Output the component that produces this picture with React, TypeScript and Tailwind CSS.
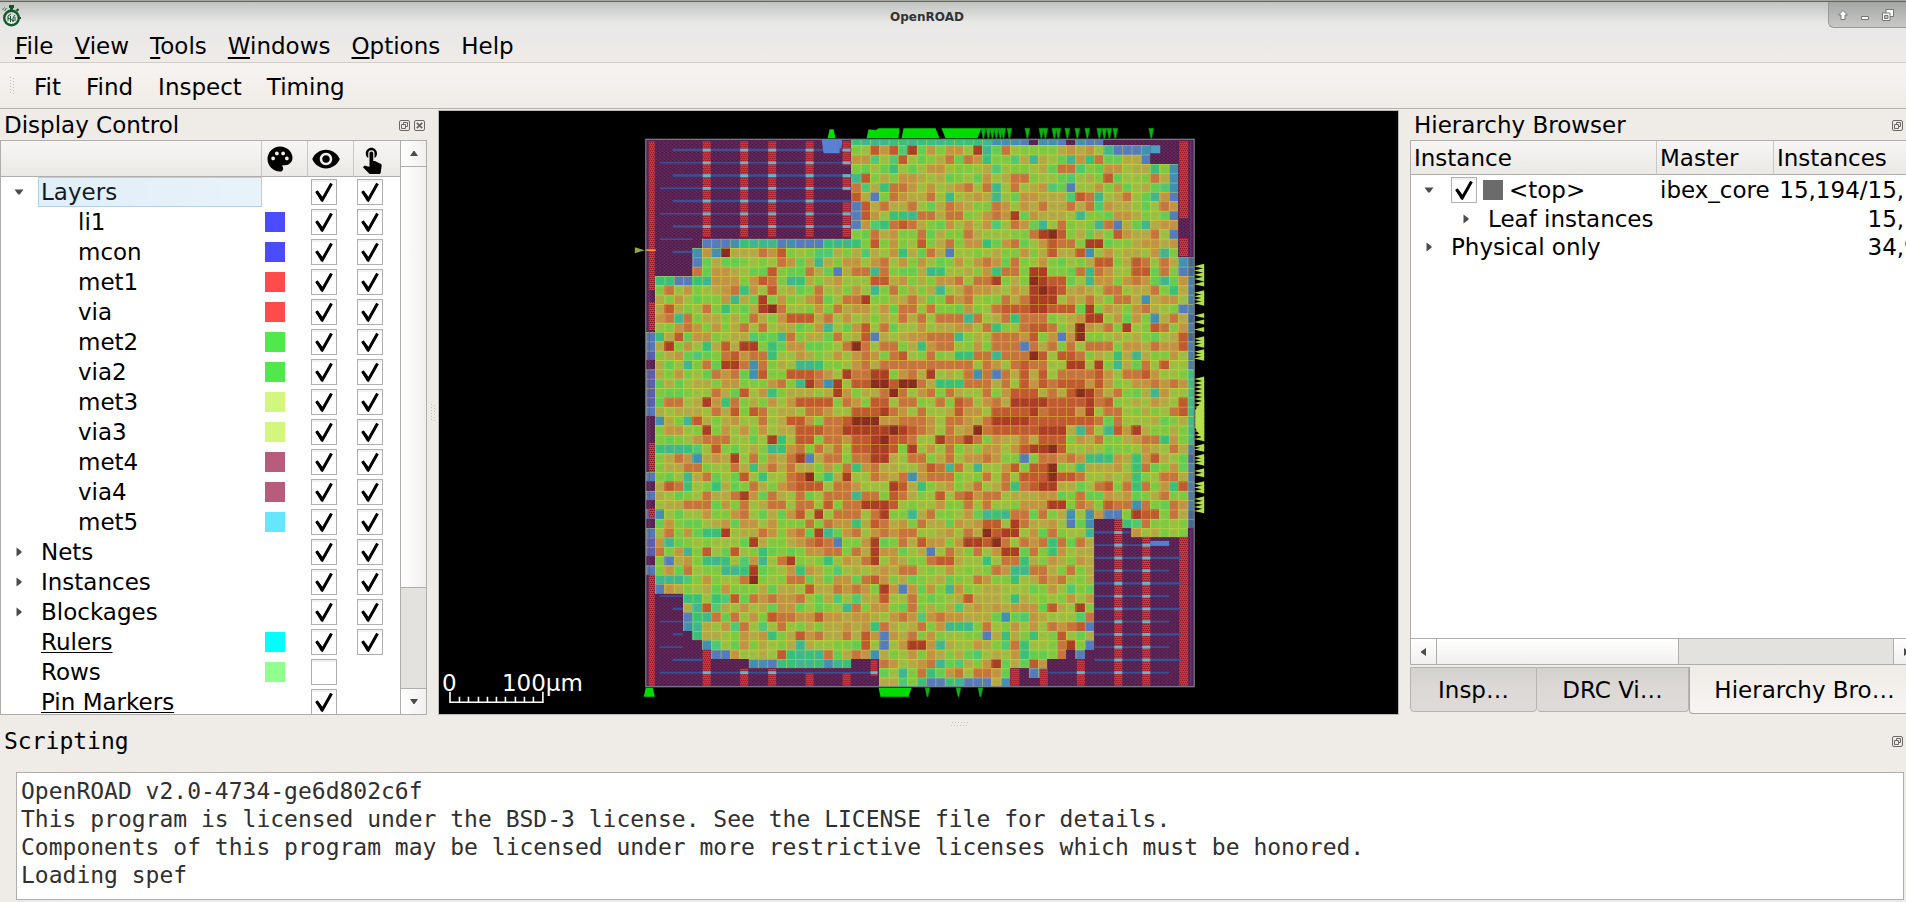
import React from "react";
import { MdPalette, MdTouchApp, MdVisibility } from "react-icons/md";

/* ---------- placement density map ---------- */

const CELL = 9.35;
const COLS = 59;
const ROWS = 59;
const DIE = { x: 645, y: 139, w: 549, h: 548 };

const cellX = (c: number) => DIE.x + c * CELL;
const cellY = (r: number) => (r === 0 ? DIE.y : 144.9 + (r - 1) * CELL);

type Spans = Record<number, string>;

// Row -> columns, ranges written as "a-b"
const WARM: Spans = {
  1: "24 26", 2: "27", 4: "23 49", 6: "22 46", 7: "23", 8: "23", 9: "27", 10: "50 42-44", 11: "24 29 43", 12: "14 43 46",
  13: "48-49 52", 14: "13 52-53", 15: "12 24-25 43-44", 16: "13 44", 18: "2 38-45", 19: "15-17", 20: "23 41-42 54",
  21: "3 23 57 41", 22: "8 57", 23: "9 27 42 44-45", 24: "40 55", 25: "12 15-17 40 42 48 53", 26: "22-23 26 40 42 44-46 48",
  27: "10 45 39-41", 28: "16-19 24-25 33 39-47 49 57", 29: "9 11 22-24 33 37-40 43-45 57", 30: "5 15-16 39-47 21",
  31: "16-18 28 37-41 50", 32: "22-27 42-44 16-17", 33: "7 22-23 26 40 44", 34: "54", 35: "30 39 41-42", 36: "10 16 40-45",
  37: "2 16-18 27 49 57 41", 38: "26 31 34", 39: "19 26 49", 40: "16 53-54", 41: "24 36-37", 42: "36-39", 43: "18 29 36",
  44: "6 9", 45: "31-32", 47: "24", 48: "17", 49: "9 25 34", 50: "6 43", 51: "13 18", 52: "46", 53: "16 23 44", 54: "23",
  55: "14", 56: "41",
};

const HOT: Spans = {
  1: "28 35", 8: "39", 10: "42", 11: "47-48", 14: "41-42", 15: "42 37", 16: "41 43", 17: "12 23 41-43", 18: "12 41-42 47",
  19: "47-48", 20: "51", 22: "2 10-11", 24: "8-9 45-46 48", 25: "21 24-25 30", 26: "17 20", 27: "20 47", 28: "6 39-42 47",
  29: "25 41 47", 30: "37-40", 31: "6 21-25 27 42-44 52", 32: "13 31 34 24", 33: "24-25 28 41-42", 34: "9 16 24-25",
  36: "21", 37: "26 42-43", 38: "10", 39: "23-25 43-44", 40: "18 25 52", 41: "39", 42: "8 18 38-39", 43: "11 24 34-35",
  44: "24 38-39", 45: "15 24", 46: "11", 48: "25", 50: "46", 54: "28-29 45", 56: "37",
};

const DENSE: Spans = {
  10: "43", 12: "8", 15: "41", 16: "42", 18: "13", 20: "46", 21: "46", 22: "22", 23: "41", 26: "24-25 27-28", 27: "26 46",
  30: "22-24", 31: "26 35", 32: "25", 33: "43", 35: "43", 36: "17 43", 42: "36", 43: "37", 47: "11",
};

const COOL: Spans = {
  0: "22-36", 1: "36 49", 2: "36 41 45 47", 3: "26 54", 4: "22", 5: "25 37", 6: "32 37 48 54", 8: "26-28 46", 9: "25 42 48 53",
  11: "10-13 19-22 36", 12: "27 55", 13: "18", 14: "24 30-31 37 47", 15: "1-2 5-6 15-16 47 55", 16: "10 24 31 56", 17: "9",
  18: "8", 19: "3 34 39", 20: "19 37", 21: "1 14 33", 22: "6 13 29", 23: "13 33-34 37 50 52", 24: "4 16-18 50", 26: "16 31-33",
  27: "13 40 54", 28: "8", 30: "4", 31: "41 46 49", 32: "14 55", 33: "1-4 13-14", 34: "47-49 52", 35: "11 22 32 35 46 52",
  36: "4 12 19 52", 37: "4 7 29 39 52 56", 38: "22", 40: "28 36-38", 41: "22 51", 42: "6-7 19 47", 43: "2 43", 44: "4 12 43",
  45: "6-8 12 19 36 40", 46: "8-10 16 40 39", 47: "1-3 39", 48: "32", 49: "4-5 7 39", 50: "5 21", 51: "5-6", 52: "5 24 32-34",
  53: "5 13 38 41", 54: "16 31 40", 55: "15-18 40", 56: "14-18 20-21 31", 57: "27 30", 58: "29 32-33",
};

const COLD: Spans = {
  0: "19-20 37-40 42-44 46-48", 1: "19 50-53", 2: "53", 3: "56", 4: "56", 5: "45 56", 6: "24 56", 7: "22", 8: "22 56", 9: "22 50",
  10: "56", 11: "6-9 14-18", 12: "5 7 32 47", 13: "5 57", 14: "20 57", 15: "3-4", 17: "53", 18: "57", 19: "54", 21: "24 44",
  22: "40", 24: "11", 25: "11 35 37", 26: "19", 30: "1", 34: "5 17 40", 36: "28", 39: "52", 40: "1 45 47 49-50", 41: "45 47",
  43: "20", 44: "30", 45: "2", 47: "48", 48: "1 27", 51: "4 38", 52: "4 47", 53: "25 36", 54: "6 25 47", 55: "7-8 24 46",
  56: "11-13 19", 57: "41-42", 58: "30-31 34-36 38",
};

// Unplaced area of the die
const EMPTY: Spans = {
  0: "0-18 21 41 45 49-58", 1: "0-21 54-58", 2: "0-21 54-58", 3: "0-21 57-58", 4: "0-21 57-58", 5: "0-21 57-58",
  6: "0-21 57-58", 7: "0-21 57-58", 8: "0-21 57-58", 9: "0-21 57-58", 10: "0-21 57-58", 11: "0-5 57-58", 12: "0-4 57-58",
  13: "0-4", 14: "0-4", 15: "0", 16: "0", 17: "0", 18: "0", 19: "0", 20: "0", 24: "0", 30: "0", 31: "0", 32: "0", 33: "0",
  34: "0", 35: "0", 37: "0", 39: "0", 41: "0", 45: "0", 47: "0", 48: "0", 42: "48-51 58", 49: "0-3", 50: "0-3", 51: "0-3",
  52: "0-3", 53: "0-4", 54: "0-5", 55: "0-6 45 47", 56: "0-10 22-24 43-47", 57: "0-24 39-40 43-47", 58: "0-24 39-47",
};

const inSpan = (spans: Spans, r: number, c: number) =>
  (spans[r] ?? "").split(" ").some((part) => {
    if (!part) return false;
    const [a, b] = part.split("-").map(Number);
    return c >= a && c <= (b ?? a);
  });

const noise = (r: number, c: number) => {
  let n = Math.imul(r + 11, 374761393) + Math.imul(c + 7, 668265263);
  n = Math.imul(n ^ (n >>> 13), 1274126177);
  return ((n ^ (n >>> 16)) >>> 0) / 4294967296;
};

const isEmpty = (r: number, c: number) =>
  inSpan(EMPTY, r, c) || (r >= 41 && c >= 48 && c <= 50) || (r >= 43 && c >= 48);

const colourOf = (r: number, c: number) => {
  const n = noise(r, c);
  if (isEmpty(r, c)) return "#5c2356";
  if (inSpan(DENSE, r, c)) return "#8a2420";
  if (inSpan(HOT, r, c)) return "#ac3626";
  if (inSpan(WARM, r, c)) return "#c25431";
  if (inSpan(COLD, r, c)) return n > 0.5 ? "#3f8cb8" : "#5278c4";
  if (inSpan(COOL, r, c)) return n > 0.5 ? "#36bf7e" : "#3cb594";
  if (c === 0) return n > 0.4 ? "#5a5ab4" : "#5373be";
  if (c === 58) return r > 24 && r < 33 ? "#3fb68c" : n > 0.4 ? "#4c78a8" : "#45609c";
  const heat = Math.exp(-((c - 24) ** 2 + (r - 31) ** 2) / 170) + Math.exp(-((c - 43) ** 2 + (r - 25) ** 2) / 160);
  const v = n + heat * 0.24;
  if (v < 0.06) return "#4cc878";
  if (v < 0.18) return "#64cc54";
  if (v < 0.36) return "#80c844";
  if (v < 0.54) return "#9cbe44";
  if (v < 0.72) return "#b4a848";
  if (v < 0.88) return "#c39246";
  return "#c87040";
};

const cells = Array.from({ length: ROWS * COLS }, (_, i) => {
  const r = Math.floor(i / COLS);
  const c = i % COLS;
  return {
    key: i,
    x: cellX(c),
    y: cellY(r),
    w: c === COLS - 1 ? DIE.x + DIE.w - cellX(c) : CELL,
    h: r === 0 ? 5.9 : CELL,
    fill: colourOf(r, c),
    empty: isEmpty(r, c),
  };
});

// Power straps: x, width, top, bottom
const STRAPS = [
  [648, 6, 141, 290], [648, 6, 302, 330], [648, 6, 443, 472], [648, 6, 508, 518], [648, 6, 575, 686],
  [702, 8, 141, 237], [739.5, 8, 141, 237], [767.5, 8, 141, 237], [805, 8, 141, 237], [842, 8, 141, 165], [842, 8, 174, 190], [842, 8, 201, 237],
  [702, 8, 650, 686], [739.5, 8, 669, 686], [767.5, 8, 669, 686], [805, 8, 673, 686], [842, 8, 673, 686], [870, 7, 660, 676],
  [1179, 9, 141, 218], [1179, 9, 238, 256], [1114, 8, 519, 686], [1142, 8, 537, 686], [1179, 9, 537, 686],
  [1076.5, 8, 660, 686], [1010, 9, 669, 686], [1039.5, 8, 669, 686],
];

// Horizontal rails over the unplaced corners: start, end, first and last index
const RAIL_ZONES: [number, number, number, number][] = [
  [659, 851, 0, 6], [659, 692, 7, 8], [1094, 1130, 30, 30], [1094, 1181, 31, 40],
  [659, 682, 35, 39], [659, 702, 40, 40], [659, 877, 41, 41], [1048, 1181, 41, 41],
];
const railY = (k: number) => 149.7 + k * 12.76;
const rails = RAIL_ZONES.flatMap(([x1, x2, a, b]) =>
  Array.from({ length: b - a + 1 }, (_, i) => {
    const k = a + i;
    return { k, y: railY(k), x1: x1 === 659 && k % 2 === 0 ? 672 : x1, x2: x2 === 1181 && k % 2 ? 1169 : x2 };
  }),
);
const crossings = rails.flatMap((rail) =>
  STRAPS.filter(([x, , t, b]) => x > 660 && x < 1170 && x >= rail.x1 && x < rail.x2 && rail.y > t && rail.y < b).map(([x, w]) => ({ x, w, y: rail.y })),
);

const TOP_PINS = [983, 988, 992, 996, 1000, 1003, 1009, 1027, 1041, 1045, 1054, 1058, 1067, 1077, 1087, 1099, 1104, 1109, 1115, 1151];
const BOTTOM_PINS = [927, 958, 980];
const RIGHT_PINS: [number, number][] = [[264, 281], [282, 286], [291, 305], [313, 318], [320, 324], [327, 332], [337, 347], [350, 360], [377, 441], [445, 451], [455, 465], [469, 477], [482, 493], [497, 513]];
const rightTeeth = RIGHT_PINS.flatMap(([a, b]) => {
  const count = Math.max(1, Math.round((b - a) / 4));
  return Array.from({ length: count }, (_, i) => a + ((b - a) * (i + 0.5)) / count);
});

function LayoutView() {
  return (
    <svg className="block h-full w-full" viewBox="438 111 960 603" role="img" aria-label="ibex_core layout with placement density">
      <defs>
        <pattern id="mesh" x={645} y={144.9} width={CELL} height={CELL} patternUnits="userSpaceOnUse">
          <path d="M0 .5H9.35M.5 0V9.35" stroke="#e8e83c" strokeOpacity=".45" />
          <path d="M2.5 2v6M5 1v3M5 6v2M7.5 3v5" stroke="#86f032" strokeOpacity=".22" strokeWidth=".8" strokeDasharray="1.2 1" />
          <path d="M2 4.6h6" stroke="#7a7a30" strokeOpacity=".3" strokeDasharray="1 1.4" />
        </pattern>
        <pattern id="weave" x={645} y={139} width="4" height="3.2" patternUnits="userSpaceOnUse">
          <path d="M0 .5h1.2M2.4 2h1.2" stroke="#2a1030" strokeOpacity=".75" />
          <path d="M2 .5h1M0 2.2h1" stroke="#8d3d78" strokeOpacity=".55" />
        </pattern>
        <pattern id="strap" width="4" height="4" patternUnits="userSpaceOnUse">
          <path d="M0 0h4v4H0z" fill="#f0343c" />
          <path d="M0 .5h1M2 .5h1M1 2.500h1M3 2.500h1" stroke="#3a0c20" />
        </pattern>
      </defs>

      <g shapeRendering="crispEdges">
        {cells.map((cell) => (
          <rect key={cell.key} x={cell.x} y={cell.y} width={cell.w} height={cell.h} fill={cell.fill} />
        ))}
      </g>
      {cells.map((cell) => (
        <rect key={cell.key} x={cell.x} y={cell.y} width={cell.w} height={cell.h} fill={cell.empty ? "url(#weave)" : "url(#mesh)"} />
      ))}
      {STRAPS.map(([x, w, t, b]) => (
        <rect key={`${x}-${t}`} x={x} y={t} width={w} height={b - t} fill="url(#strap)" />
      ))}
      {rails.map((rail, i) => (
        <path key={i} d={`M${rail.x1} ${rail.y}H${rail.x2}`} stroke="#35599c" strokeWidth={rail.k % 2 ? 1.6 : 2.4} strokeOpacity=".85" />
      ))}
      {crossings.map((cross, i) => (
        <rect key={i} x={cross.x} y={cross.y - 1.3} width={cross.w} height="2.8" fill="#6cb4c4" />
      ))}
      <path d="M821 139h20v9h-2v5h-16z" fill="#5a80d4" />
      <path d="M1150 541h19v5h-19z" fill="#5080d0" />
      <path d="M1150 145h10v8h-10z" fill="#4aa0c4" />
      <path d="M648.5 141V686M1190.5 141V256M1190.5 530V686" stroke="#6a4a86" strokeOpacity=".6" />
      <rect x={DIE.x} y={DIE.y} width={DIE.w} height={DIE.h} fill="none" stroke="#77808c" strokeWidth="1.2" />

      <g fill="#00dc00">
        <path d="M827 138l2-9h4l2 9z" />
        <path d="M866 138l2-9 7 1 3-2h21l-1 10zM901 138l2-10h32l1 10zM941 128h40l-4 10h-32zM934 138l1-10 4 10z" />
        <path d="M643 697l2-9h7l2 9zM880 697l-2-9h33l-3 9z" />
      </g>
      <g fill="#0ab410" stroke="#08900c" strokeWidth=".5">
        {TOP_PINS.map((x) => (
          <path key={x} d={`M${x - 2.5} 128h5l-2 10h-1z`} />
        ))}
        {BOTTOM_PINS.map((x) => (
          <path key={x} d={`M${x - 2.5} 688h5l-2 9h-1z`} />
        ))}
      </g>
      <g fill="#b2e04a">
        {rightTeeth.map((y) => (
          <path key={y} d={`M1194 ${y}l10-2.6v5z`} />
        ))}
        <path d="M1195 410l9-12v44l-9-14z" />
      </g>
      <path d="M634 247l10 3-10 3z" fill="#8fa838" />
      <path d="M645 250h10" stroke="#f0a840" strokeWidth="1.5" />

      <g fill="#fff" fontSize="23">
        <text x="441" y="691">0</text>
        <text x="501" y="691">100µm</text>
      </g>
      <path d="M449 692v10.500h93V692M458.500 697v5M467.500 697v5M477.500 697v5M486.500 697v5M495.500 697v5M504.500 697v5M514.500 697v5M523.500 697v5M532.500 697v5" fill="none" stroke="#fff" strokeWidth="1.6" />
    </svg>
  );
}

/* ---------- small controls ---------- */

function Tick({ label, checked = true }: { label: string; checked?: boolean }) {
  return (
    <span className="grid size-[26px] shrink-0">
      <input
        type="checkbox"
        aria-label={label}
        defaultChecked={checked}
        className="peer size-[26px] appearance-none border border-[#b0b0b0] bg-white shadow-[inset_0_2px_1px_#f0f0f0] [grid-area:1/1]"
      />
      <svg viewBox="0 0 26 26" className="pointer-events-none invisible size-[26px] peer-checked:visible [grid-area:1/1]">
        <path d="M5.500 12.500 11.500 20.500 20.500 4.500" fill="none" stroke="#000" strokeWidth="3" />
        <path d="M4.500 12.500l2-1 4.700 6.500v4.500h-1.200z" />
      </svg>
    </span>
  );
}

function Arrow({ open }: { open: boolean }) {
  return (
    <svg viewBox="0 0 10 10" className="size-[10px]" fill="#4c4c4c">
      {open ? <path d="M.5 2.500h9L5.800 7.500H4.200z" /> : <path d="M2.500 .5v9L7.500 5.800V4.200z" />}
    </svg>
  );
}

function DockIcon({ kind }: { kind: "float" | "close" }) {
  return (
    <button type="button" aria-label={kind === "float" ? "Float panel" : "Close panel"} className="size-[11px]">
      <svg viewBox="0 0 11 11" className="size-[11px]" fill="none" stroke="#6b6966">
        <rect x=".5" y=".5" width="10" height="10" rx="1.500" />
        {kind === "float" ? <path d="M4.500 4V2.500h4v4H7M2.500 4.500h4v4h-4z" /> : <path d="M2.800 2.800l5.400 5.400M8.200 2.800L2.800 8.200" strokeWidth="1.800" />}
      </svg>
    </button>
  );
}

function Grip({ vertical = false }: { vertical?: boolean }) {
  return (
    <svg viewBox="0 0 4 18" className={vertical ? "h-[18px] w-[4px]" : "h-[18px] w-[4px] rotate-90"} stroke="#c4c1bd" strokeDasharray="1 2">
      <path d="M.5 0v18M3.500 1v17" />
    </svg>
  );
}

/* ---------- panels ---------- */

const MENUS = ["File", "View", "Tools", "Windows", "Options"];
const TOOLS = ["Fit", "Find", "Inspect", "Timing"];

type Row = { name: string; kind: "open" | "closed" | "leaf" | "child"; swatch?: string; visible?: boolean; selectable?: boolean; link?: boolean };

const DISPLAY_ROWS: Row[] = [
  { name: "Layers", kind: "open", selectable: true },
  { name: "li1", kind: "child", swatch: "bg-[#4b4bff]", selectable: true },
  { name: "mcon", kind: "child", swatch: "bg-[#4b4bff]", selectable: true },
  { name: "met1", kind: "child", swatch: "bg-[#ff4b4b]", selectable: true },
  { name: "via", kind: "child", swatch: "bg-[#ff4b4b]", selectable: true },
  { name: "met2", kind: "child", swatch: "bg-[#50e84b]", selectable: true },
  { name: "via2", kind: "child", swatch: "bg-[#50e84b]", selectable: true },
  { name: "met3", kind: "child", swatch: "bg-[#d2f67e]", selectable: true },
  { name: "via3", kind: "child", swatch: "bg-[#d2f67e]", selectable: true },
  { name: "met4", kind: "child", swatch: "bg-[#b85c7c]", selectable: true },
  { name: "via4", kind: "child", swatch: "bg-[#b85c7c]", selectable: true },
  { name: "met5", kind: "child", swatch: "bg-[#64e6ff]", selectable: true },
  { name: "Nets", kind: "closed", selectable: true },
  { name: "Instances", kind: "closed", selectable: true },
  { name: "Blockages", kind: "closed", selectable: true },
  { name: "Rulers", kind: "leaf", swatch: "bg-[#00ffff]", selectable: true, link: true },
  { name: "Rows", kind: "leaf", swatch: "bg-[#90ff90]", visible: false },
  { name: "Pin Markers", kind: "leaf", link: true },
];

const headCell = "border-b border-[#b0aeab] bg-linear-to-b from-[#f8f6f4] to-[#ebe9e6] p-0 font-normal";

function DisplayControl() {
  return (
    <section className="flex w-[427px] shrink-0 flex-col">
      <header className="flex h-[30px] shrink-0 items-center pr-[2px] pl-1">
        <h2 className="flex-1">Display Control</h2>
        <div className="flex gap-1">
          <DockIcon kind="float" />
          <DockIcon kind="close" />
        </div>
      </header>
      <div className="flex min-h-0 flex-1 border border-[#b0aeab] bg-white">
        <div className="min-w-0 flex-1 overflow-hidden">
          <table className="w-full table-fixed border-separate border-spacing-0">
            <thead>
              <tr className="h-[36px]">
                <th className={`${headCell} border-r border-r-[#c9c7c4]`} aria-label="Name" />
                <th className={`${headCell} w-[46px] border-r border-r-[#c9c7c4] pl-[3px]`} aria-label="Color">
                  <MdPalette className="size-[30px]" />
                </th>
                <th className={`${headCell} w-[46px] border-r border-r-[#c9c7c4] pl-[3px]`} aria-label="Visible">
                  <MdVisibility className="size-[30px]" />
                </th>
                <th className={`${headCell} w-[46px] pl-[3px]`} aria-label="Selectable">
                  <MdTouchApp className="size-[30px]" />
                </th>
              </tr>
            </thead>
            <tbody>
              {DISPLAY_ROWS.map((row) => (
                <tr key={row.name} className="h-[30px]">
                  <td className="p-0">
                    <div className="flex h-[30px] items-center pl-[13px]">
                      <span className="w-[24px] shrink-0">
                        {row.kind === "open" && <Arrow open />}
                        {row.kind === "closed" && <Arrow open={false} />}
                      </span>
                      <span
                        className={
                          row.kind === "open"
                            ? "h-[30px] flex-1 border border-[#b4d0e4] bg-linear-to-r from-[#e0eff9] to-[#e8f2f9] pl-[2px] leading-[28px] text-[#101c28]"
                            : row.kind === "child"
                              ? "pl-[40px]"
                              : row.link
                                ? "pl-[3px] underline decoration-1 underline-offset-2"
                                : "pl-[3px]"
                        }
                      >
                        {row.name}
                      </span>
                    </div>
                  </td>
                  <td className="p-0 pl-[3px]">{row.swatch && <span className={`block size-5 ${row.swatch}`} />}</td>
                  <td className="p-0 pl-[3px]">
                    <Tick label={`${row.name} visible`} checked={row.visible ?? true} />
                  </td>
                  <td className="p-0 pl-[3px]">{row.selectable && <Tick label={`${row.name} selectable`} />}</td>
                </tr>
              ))}
            </tbody>
          </table>
        </div>
        <div className="flex w-[26px] shrink-0 flex-col border-l border-[#b0aeab] bg-linear-to-r from-white to-[#f1f0ee]">
          <button type="button" aria-label="Scroll up" className="grid h-[26px] shrink-0 place-items-center border-b border-[#b0aeab]">
            <svg viewBox="0 0 8 5" className="h-[5px] w-2" fill="#4c4c4c"><path d="M0 5h8L4.500 0h-1z" /></svg>
          </button>
          <div className="flex-[422]" />
          <div className="flex-[100] border-y border-[#b0aeab] bg-[#e3e2df]" />
          <button type="button" aria-label="Scroll down" className="grid h-[25px] shrink-0 place-items-center">
            <svg viewBox="0 0 8 5" className="h-[5px] w-2" fill="#4c4c4c"><path d="M0 0h8L4.500 5h-1z" /></svg>
          </button>
        </div>
      </div>
    </section>
  );
}

function HierarchyBrowser() {
  return (
    <section className="w-[496px] shrink-0 overflow-hidden">
      <div className="flex h-full w-[510px] flex-col">
        <header className="flex h-[30px] shrink-0 items-center pr-[17px] pl-1">
          <h2 className="flex-1">Hierarchy Browser</h2>
          <DockIcon kind="float" />
        </header>
        <div className="flex min-h-0 flex-1 flex-col border border-[#b0aeab] bg-white">
          <div className="min-h-0 flex-1 overflow-hidden">
            <table className="w-[543px] table-fixed border-separate border-spacing-0 text-left whitespace-nowrap">
              <thead>
                <tr className="h-[34px]">
                  <th className={`${headCell} w-[246px] border-r border-r-[#c9c7c4] pl-[3px]`}>Instance</th>
                  <th className={`${headCell} w-[117px] border-r border-r-[#c9c7c4] pl-[3px]`}>Master</th>
                  <th className={`${headCell} pl-[3px]`}>Instances</th>
                </tr>
              </thead>
              <tbody>
                <tr className="h-[30px]">
                  <td className="p-0">
                    <div className="flex items-center pl-[13px]">
                      <Arrow open />
                      <span className="ml-[17px]"><Tick label="<top>" /></span>
                      <span className="mr-[6px] ml-[6px] size-5 bg-[#6b6b6b]" />
                      &lt;top&gt;
                    </div>
                  </td>
                  <td className="p-0 pl-[3px]">ibex_core</td>
                  <td className="p-0 pr-[6px] text-right">15,194/15,194</td>
                </tr>
                <tr className="h-[28px] leading-[28px]">
                  <td className="p-0">
                    <div className="flex items-center gap-[17px] pl-[50px]">
                      <Arrow open={false} />
                      Leaf instances
                    </div>
                  </td>
                  <td />
                  <td className="p-0 pr-[6px] text-right">15,194</td>
                </tr>
                <tr className="h-[28px] leading-[28px]">
                  <td className="p-0">
                    <div className="flex items-center gap-[17px] pl-[13px]">
                      <Arrow open={false} />
                      Physical only
                    </div>
                  </td>
                  <td />
                  <td className="p-0 pr-[6px] text-right">34,900</td>
                </tr>
              </tbody>
            </table>
          </div>
          <div className="flex h-[26px] shrink-0 border-t border-[#b0aeab] bg-linear-to-b from-white to-[#f1f0ee]">
            <button type="button" aria-label="Scroll left" className="grid w-[26px] place-items-center border-r border-[#b0aeab]">
              <svg viewBox="0 0 5 8" className="h-2 w-[5px]" fill="#4c4c4c"><path d="M5 0v8L0 4.500v-1z" /></svg>
            </button>
            <div className="w-[241px]" />
            <div className="flex-1 border-x border-[#b0aeab] bg-[#e3e2df]" />
            <button type="button" aria-label="Scroll right" className="grid w-[25px] place-items-center">
              <svg viewBox="0 0 5 8" className="h-2 w-[5px]" fill="#4c4c4c"><path d="M0 0v8l5-3.500v-1z" /></svg>
            </button>
          </div>
        </div>
        <div role="tablist" className="mt-[2px] flex h-[48px] shrink-0 items-start">
          <button type="button" role="tab" className="h-[45px] w-[127px] rounded-b-sm border border-[#b6b3b0] bg-linear-to-b from-[#d3d1ce] via-[#dcd9d6] to-[#dedad7]">Insp…</button>
          <button type="button" role="tab" className="h-[45px] w-[152px] rounded-b-sm border border-l-0 border-[#b6b3b0] bg-linear-to-b from-[#d3d1ce] via-[#dcd9d6] to-[#dedad7]">DRC Vi…</button>
          <button type="button" role="tab" aria-selected="true" className="h-[47px] flex-1 rounded-b-sm border border-t-0 border-[#a9a6a3] bg-linear-to-b from-[#efebe7] to-[#f8f4f1]">Hierarchy Bro…</button>
        </div>
      </div>
    </section>
  );
}

const LOG = [
  "OpenROAD v2.0-4734-ge6d802c6f",
  "This program is licensed under the BSD-3 license. See the LICENSE file for details.",
  "Components of this program may be licensed under more restrictive licenses which must be honored.",
  "Loading spef",
];

export default function App() {
  return (
    <div className="flex h-screen flex-col overflow-hidden bg-[#efebe7] font-['DejaVu_Sans',sans-serif] text-[23px] leading-[30px] text-black">
      <div className="shrink-0 border-t border-[#a4a6a0] bg-linear-to-b from-[#bfc2bf] via-[#e8e8e7] via-35% to-[#efebe7]">
        <header className="flex h-[30px] items-start border-t border-[#62655f]">
          <svg viewBox="0 0 20 24" className="mt-[2px] ml-[2px] h-6 w-5 shrink-0" fill="none" stroke="#14572f">
            <circle cx="9.500" cy="14" r="7.300" strokeWidth="2.400" />
            <path d="M7 2.500h5M9.500 3v4" strokeWidth="3" />
            <path d="M14.500 7l2-2M17 14h2" strokeWidth="2" />
            <path d="M.5 6l2-2.500M2.500 7l2-3" strokeWidth=".8" />
            <path d="M6 17v-5l3-2M8.500 18v-6M11 18v-4l2-3M6 14l6 3M13 13v4" strokeWidth="1" />
          </svg>
          <h1 className="flex-1 pl-[4px] text-center text-[12px] leading-[30px] font-bold text-[#333]">OpenROAD</h1>
          <div className="flex h-[26px] w-[78px] shrink-0 items-center gap-[13px] overflow-hidden rounded-bl-md border-b border-l border-[#989a98] bg-linear-to-b from-[#a4a6a4] to-[#c8c9c8] pl-[9px]">
            <button type="button" aria-label="Shade">
              <svg viewBox="0 0 10 10" className="size-[10px]"><path d="M5 .5L9.500 5H7v4.500H3V5H.5z" fill="#fff" stroke="#777" /></svg>
            </button>
            <button type="button" aria-label="Minimize">
              <svg viewBox="0 0 8 10" className="h-[10px] w-2"><path d="M.5 6.500h7v3h-7z" fill="#fff" stroke="#777" /></svg>
            </button>
            <button type="button" aria-label="Restore" className="shrink-0">
              <svg viewBox="0 0 12 12" className="size-3"><path d="M4 .5h7.500v7H4z" fill="#fff" stroke="#777" /><path d="M.5 4h7.500v7.500H.5z" fill="#fff" stroke="#777" /><path d="M2.500 6.500h3.500v3H2.500z" fill="#bbb" stroke="#777" /></svg>
            </button>
          </div>
        </header>
        <nav className="flex h-[32px] items-start gap-px border-b border-[#cfccc9] pl-[5px]">
          {MENUS.map((menu) => (
            <button type="button" key={menu} className="px-[10px]">
              <span className="underline decoration-2 underline-offset-[3px]">{menu[0]}</span>
              {menu.slice(1)}
            </button>
          ))}
          <button type="button" className="px-[10px]">Help</button>
        </nav>
      </div>

      <div className="flex h-[46px] shrink-0 items-center border-b border-[#b5b2af] bg-linear-to-b from-[#f7f3f0] to-[#efebe7] pl-[10px]">
        <Grip vertical />
        <div className="flex gap-px pt-[2px] pl-2">
          {TOOLS.map((tool) => (
            <button type="button" key={tool} className="px-[12px]">{tool}</button>
          ))}
        </div>
      </div>

      <main className="flex min-h-0 flex-1 pt-px">
        <DisplayControl />
        <div className="grid w-[11px] shrink-0 place-items-center"><Grip vertical /></div>
        <div className="min-w-0 flex-1 border border-[#bab8b4] bg-black">
          <LayoutView />
        </div>
        <div className="w-[11px] shrink-0" />
        <HierarchyBrowser />
      </main>

      <section className="flex h-[187px] shrink-0 flex-col font-['DejaVu_Sans_Mono',monospace]">
        <div className="grid h-[10px] shrink-0 place-items-center pl-3"><Grip /></div>
        <header className="flex h-[32px] shrink-0 items-center pr-[3px] pl-1">
          <h2 className="flex-1">Scripting</h2>
          <DockIcon kind="float" />
        </header>
        <div className="mt-[15px] mr-[2px] mb-[2px] ml-4 flex-1 border border-[#b0aeab] bg-white px-1 pt-[4px] leading-[28px] text-[#303030]">
          {LOG.map((line) => (
            <p key={line}>{line}</p>
          ))}
        </div>
      </section>
    </div>
  );
}
